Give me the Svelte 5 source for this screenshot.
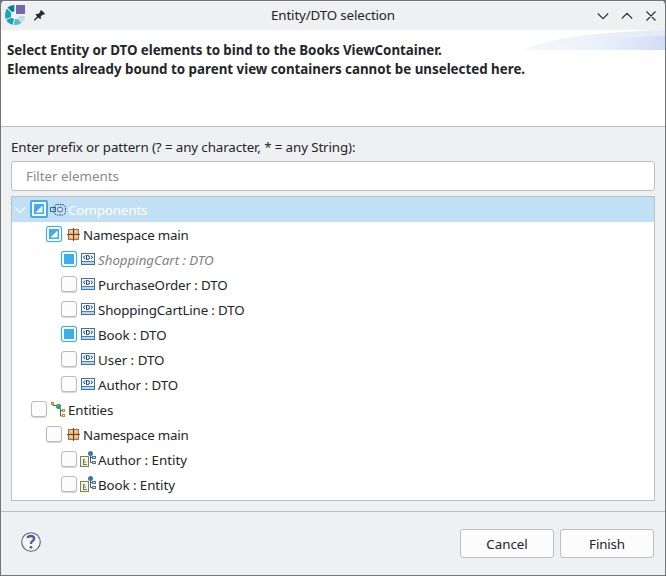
<script>
  const rows = [
    { level: 0, state: 'mixed', icon: 'components', text: 'Components', selected: true, open: true, tracking: -0.1 },
    { level: 1, state: 'mixed', icon: 'namespace', text: 'Namespace main', tracking: -0.22 },
    { level: 2, state: 'on', icon: 'dto', text: 'ShoppingCart : DTO', bound: true, tracking: -0.03 },
    { level: 2, state: 'off', icon: 'dto', text: 'PurchaseOrder : DTO', tracking: -0.12 },
    { level: 2, state: 'off', icon: 'dto', text: 'ShoppingCartLine : DTO', tracking: -0.14 },
    { level: 2, state: 'on', icon: 'dto', text: 'Book : DTO', tracking: -0.08 },
    { level: 2, state: 'off', icon: 'dto', text: 'User : DTO', tracking: 0 },
    { level: 2, state: 'off', icon: 'dto', text: 'Author : DTO', tracking: -0.05 },
    { level: 0, state: 'off', icon: 'entities', text: 'Entities', tracking: -0.1 },
    { level: 1, state: 'off', icon: 'namespace', text: 'Namespace main', tracking: -0.22 },
    { level: 2, state: 'off', icon: 'entity', text: 'Author : Entity', tracking: -0.03 },
    { level: 2, state: 'off', icon: 'entity', text: 'Book : Entity', tracking: -0.08 }
  ];
</script>

{#snippet glyph(name)}
  <svg class="glyph" width="17" height="18" viewBox="0 0 17 18" fill="none">
    {#if name === 'components'}
      <rect x=".5" y="6.5" width="5" height="4" stroke="#3e6a9f" />
      <rect x="4" y="3.5" width="11.5" height="10.500" rx="3.500" stroke="#163c70" stroke-dasharray="1.5 1" />
      <circle cx="10" cy="8.500" r="2.500" fill="#d8eafa" stroke="#41699c" />
    {:else if name === 'namespace'}
      <rect x="3.500" y="3.500" width="10" height="10" fill="#e2b180" stroke="#b06f3c" />
      <path d="M5 5.500h2.500M10 5.500h2.500M5 10.500h2.500M10 10.500h2.500" stroke="#f4d3a8" stroke-width="2" />
      <path d="M8.500 2v13M2 8.500h13" stroke="#70401f" />
    {:else if name === 'dto'}
      <rect x="1.500" y="2.500" width="13" height="11" fill="#f4faff" stroke="#3c72ac" />
      <path d="M2 10.500h12" stroke="#4a7eb5" />
      <path d="M2 12h12" stroke="#b7d8f2" stroke-width="2" />
      <path d="M5 4.500 3.500 6.200 5 8M11 4.500l1.500 1.700L11 8M6.500 4.500v4h1.200q1.800 0 1.800-2t-1.800-2z" stroke="#182f60" />
    {:else if name === 'entities'}
      <path d="M3 2.500v2h4M8.500 6v1.500h2v7.500h2M10.500 9.500h2" stroke="#58636c" />
      <rect x="1.500" y="1.500" width="2" height="2" fill="#fff4ad" stroke="#b48a2a" />
      <circle cx="8.500" cy="5.300" r="2.600" fill="#3e9b60" />
      <path d="M7 4.500h2" stroke="#72c38a" />
      <rect x="12.500" y="8.500" width="2" height="2" fill="#fff7bb" stroke="#b6942b" />
      <rect x="12.500" y="13.500" width="2" height="2" fill="#fff7bb" stroke="#b6942b" />
    {:else}
      <rect x=".5" y="5.500" width="8" height="10" fill="#f3f7e9" stroke="#8f793f" />
      <path d="M3.500 8v6M4 8.500h1M4 11h2M4 13.500h3" stroke="#359366" />
      <path d="M10.500 4v7.500h2M10.500 6.500h2" stroke="#425780" />
      <circle cx="10.500" cy="2.500" r="2.500" fill="#337bb5" />
      <rect x="12.500" y="5.500" width="3" height="2" fill="#dfe8f5" stroke="#5570a0" />
      <rect x="12.500" y="10.500" width="3" height="2" fill="#dfe8f5" stroke="#5570a0" />
    {/if}
  </svg>
{/snippet}

<div class="desktop">
  <main class="dialog">
    <header class="titlebar">
      <svg class="logo" width="20" height="20" viewBox="0 0 20 20">
        <path d="M9.300 0v6.500L7 7 2.500 2.500Q5 .2 9.300 0z" fill="#087f91" />
        <path d="M1.800 3.400 6.300 8 6 12 .7 14Q-1 8 1.800 3.400z" fill="#19a4b7" />
        <path d="M6.600 12.700 9 14 7.500 19.700Q3 18.500 1.200 15z" fill="#17a3b7" />
        <path d="m10 14 3.500.2 3 3.500Q13 20.700 8.500 19.800z" fill="#55bfc8" />
        <path d="M14 11h6q0 4-3 6l-3.300-3.600z" fill="#b8e0e3" />
        <path d="M11 0h9v9h-9z" fill="#7567aa" />
      </svg>
      <svg class="pin" width="11" height="11" viewBox="0 0 12.500 12.500">
        <path d="M8 0 12.500 4 11 5.500 9.800 5.300 7.500 7.500 8 9 7 10.500 4.800 8.500 1 12H0v-1L3.600 7.200 1.700 5.200 3 4.200l1.700.4L7.200 2.200 7 1z" fill="#26292c" />
      </svg>
      <h1>Entity/DTO selection</h1>
      <svg class="controls" width="60" height="12" viewBox="0 0 60 12" fill="none" stroke="#303438" stroke-width="1.150">
        <path d="m.8 3.500 5.200 5.200 5.200-5.200M24.800 8.500 30 3.300l5.200 5.200M49.500 1.500l9 9m0-9-9 9" />
      </svg>
    </header>

    <section class="message">
      <svg class="swoosh" width="141" height="20" viewBox="0 0 141 20">
        <defs>
          <linearGradient id="wash"><stop stop-color="#f6f9fd" /><stop offset=".55" stop-color="#eaf0fb" /><stop offset="1" stop-color="#d2dcf5" /></linearGradient>
          <linearGradient id="edge"><stop stop-color="#f4f8fc" /><stop offset="1" stop-color="#e2eaf8" /></linearGradient>
        </defs>
        <path d="M0 20Q32 3 141 0v20z" fill="url(#edge)" />
        <path d="M0 20Q45 8 141 6v14z" fill="url(#wash)" />
      </svg>
      <p class="first">Select Entity or DTO elements to bind to the Books ViewContainer.</p>
      <p>Elements already bound to parent view containers cannot be unselected here.</p>
    </section>

    <section class="content">
      <label for="filter">Enter prefix or pattern (? = any character, * = any String):</label>
      <input id="filter" type="text" placeholder="Filter elements" />
      <div class="tree">
        {#each rows as row}
          <div class="row level{row.level}" class:selected={row.selected} class:bound={row.bound}>
            <span class="expander">
              {#if row.open}
                <svg width="12" height="8" viewBox="0 0 12 8" fill="none"><path d="m1 1.500 5 5 5-5" stroke="#f7fcff" stroke-width="1.200" /></svg>
              {/if}
            </span>
            <span class="check {row.state}">
              {#if row.state === 'mixed'}
                <svg width="10" height="10" viewBox="0 0 10 10"><path d="M0 0h10v10H0z" fill="#3daee9" /><path d="M8.500 1.500v7h-7z" fill="#fff" /></svg>
              {/if}
            </span>
            {@render glyph(row.icon)}
            <span class="name" style="letter-spacing: {row.tracking}px">{row.text}</span>
          </div>
        {/each}
      </div>
    </section>

    <footer>
      <svg class="help" width="20" height="20" viewBox="0 0 20 20" fill="none">
        <circle cx="10" cy="10" r="9.300" fill="#f5f5f5" stroke="#536387" stroke-width="1.100" />
        <path d="M6.500 6Q7 4 10 4t3.200 2.600q0 1.500-1.700 2.500T10 12" stroke="#4b6090" stroke-width="2.300" />
        <circle cx="10" cy="15.300" r="1.400" fill="#4b6090" />
      </svg>
      <div class="actions"><button>Cancel</button><button class="finish">Finish</button></div>
    </footer>
  </main>
</div>

<style>
  :global(body) { margin: 0; }
  * { box-sizing: border-box; }
  .desktop { width: 666px; height: 576px; padding: 1px; background: #737476; font: 13.333px/19px "Noto Sans", sans-serif; color: #232629; overflow: hidden; }
  .dialog { display: flex; flex-direction: column; height: 574px; background: #eff0f1; border-radius: 4px 4px 0 0; overflow: hidden; }
  .titlebar { display: flex; align-items: center; flex: none; height: 29px; padding: 0 8px 0 4px; border-top: 1px solid #f8f8f8; }
  .logo { margin-top: -2px; }
  .pin { margin: -2px 0 0 9px; }
  h1 { flex: 1; margin: -2px 0 0; padding-left: 24px; text-align: center; font-size: 13.333px; font-weight: 400; line-height: 19px; letter-spacing: -.14px; }
  .message { position: relative; flex: none; height: 97px; padding: 11px 6px; background: #fff; border-bottom: 1px solid #bcbebf; font-weight: 700; }
  .swoosh { position: absolute; right: 0; top: 0; }
  .message p { position: relative; margin: 0; white-space: nowrap; }
  .message .first { letter-spacing: -.04px; }
  .content { display: flex; flex-direction: column; flex: none; height: 384px; padding: 11px 10px 10px; }
  label { height: 23px; letter-spacing: -.105px; }
  input { flex: none; width: 644px; height: 30px; margin: 0; padding: 0 14px; border: 1px solid #bcbebf; border-radius: 3px; background: #fff; font: inherit; color: inherit; outline: none; }
  input::placeholder { color: #8a8c8e; opacity: 1; }
  .tree { flex: none; width: 644px; height: 305px; margin-top: 5px; border: 1px solid #bcbebf; background: #fff; }
  .row { display: flex; align-items: center; height: 25px; }
  .level1 { padding-left: 15px; }
  .level2 { padding-left: 30px; }
  .expander { display: flex; flex: none; width: 19px; padding: 1px 0 0 2px; }
  .check { display: flex; align-items: center; justify-content: center; flex: none; width: 16px; height: 16px; margin-bottom: 1px; border: 1px solid #b9bbbc; border-radius: 3px; background: #fcfcfc; box-shadow: 0 1px 1px #d3d4d4; }
  .mixed, .on { border-color: #3daee9; box-shadow: 0 0 1px #3daee9; }
  .on::before { content: ""; width: 10px; height: 10px; background: #3daee9; }
  .selected { background: #c1dff5; color: #fff; }
  .selected .check { border-radius: 1px; box-shadow: 0 0 0 1px #3daee9; }
  .glyph { flex: none; margin: 1px 1px 0 3px; overflow: visible; }
  .name { padding-top: 2px; white-space: pre; }
  .bound { color: #7f8182; font-style: italic; }
  footer { display: flex; justify-content: space-between; flex: 1; padding: 17px 11px 0 20px; border-top: 1px solid #bcbebf; }
  .help { margin-top: 3px; }
  .actions { display: flex; gap: 6px; }
  button { width: 94px; height: 29px; padding: 2px 0 0; border: 1px solid #bcbebf; border-radius: 3px; background: #fcfcfc; font: inherit; color: inherit; }
  .finish { letter-spacing: -.15px; }
</style>
